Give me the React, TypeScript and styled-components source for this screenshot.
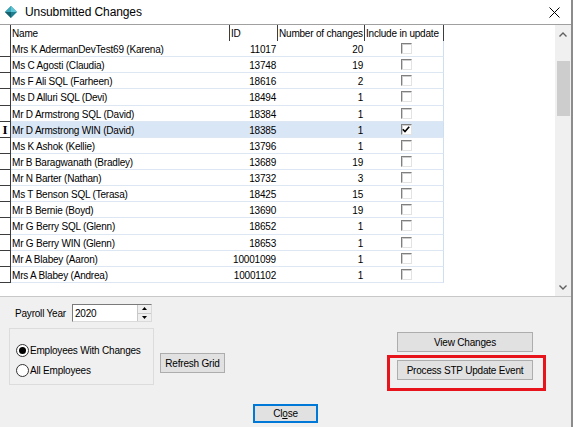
import React from 'react';
import styled, { createGlobalStyle } from 'styled-components';

const GlobalStyle = createGlobalStyle`
    html, body {
        margin: 0;
        padding: 0;
        background: #f0f0f0;
    }

    body {
        font-family: "Liberation Sans", Arial, sans-serif;
        font-size: 10px;
        letter-spacing: -0.2px;
        color: #000;
    }
`;

const ROW_H = 16.13;

const COLS = {
    indicator: 12,
    name: 219,
    id: 48,
    changes: 87,
    include: 79,
};

// <WINDOW>
const Window = styled.div`
    display: flex;
    flex-direction: column;
    width: 573px;
    height: 427px;
    background: #f0f0f0;
    box-sizing: border-box;
    border-right: 2px solid #8c8c8c;
    overflow: hidden;
`;

const TitleBar = styled.div`
    display: flex;
    align-items: center;
    height: 24px;
    flex-shrink: 0;
    background: #fff;
    padding-left: 5px;
`;

const Title = styled.span`
    margin-left: 8px;
    font-family: "Liberation Sans", Arial, sans-serif;
    font-size: 12px;
    letter-spacing: -0.1px;
    color: #000;
`;

const CloseX = styled.div`
    display: flex;
    margin-left: auto;
    margin-right: 11px;
`;
// </WINDOW>

// <GRID>
const GridPanel = styled.div`
    display: flex;
    height: 271px;
    flex-shrink: 0;
    background: #fff;
    border-top: 1px solid #a0a0a0;
    border-bottom: 1px solid #c8c8c8;
`;

const Table = styled.div`
    flex: 1;
    display: flex;
    flex-direction: column;
`;

const HeaderRow = styled.div`
    display: flex;
    height: 16px;
    flex-shrink: 0;
`;

const Row = styled.div`
    display: flex;
    height: ${ROW_H}px;
    flex-shrink: 0;
`;

const Indicator = styled.div<{ $header?: boolean }>`
    width: ${COLS.indicator - 1}px;
    flex-shrink: 0;
    border-right: 1px solid #3c3c3c;
    border-bottom: ${({ $header }) => ($header ? 'none' : '1px solid #3c3c3c')};
    box-sizing: border-box;
    display: flex;
    align-items: center;
    justify-content: center;
    font-family: "Liberation Serif", serif;
    font-weight: bold;
    font-size: 13px;
    line-height: 1;
`;

const HeadCell = styled.div<{ $w: number }>`
    width: ${({ $w }) => $w}px;
    flex-shrink: 0;
    box-sizing: border-box;
    border-right: 1px solid #3c3c3c;
    padding: 1px 0 0 1px;
    display: flex;
    align-items: center;
    white-space: nowrap;
    overflow: hidden;
`;

const Cells = styled.div<{ $selected?: boolean }>`
    display: flex;
    background: ${({ $selected }) => ($selected ? '#d9e6f5' : '#fff')};
    border-bottom: 1px solid #dde7f4;
    border-right: 1px solid #cfdff2;
    box-sizing: border-box;
`;

const Cell = styled.div<{ $w: number; $align?: string }>`
    width: ${({ $w }) => $w}px;
    flex-shrink: 0;
    box-sizing: border-box;
    display: flex;
    align-items: center;
    justify-content: ${({ $align }) => $align || 'flex-start'};
    padding: 2px 2px 0 1px;
    white-space: nowrap;
    overflow: hidden;
`;

const CheckBox = styled.div`
    width: 11px;
    height: 11px;
    box-sizing: border-box;
    border: 1px solid;
    border-color: #7f7f7f #e3e3e3 #e3e3e3 #7f7f7f;
    box-shadow: inset 1px 1px 0 #cfcfcf;
    background: #fff;
    display: flex;
    align-items: center;
    justify-content: center;
    margin: -2px 0 0 5px;
`;

const ScrollBar = styled.div`
    width: 16px;
    flex-shrink: 0;
    background: #f0f0f0;
    display: flex;
    flex-direction: column;
    align-items: center;
    padding: 7px 0 6px;
    box-sizing: border-box;
`;

const Thumb = styled.div`
    width: 13px;
    height: 55px;
    margin-top: 24px;
    background: #cdcdcd;
`;

const ScrollSpacer = styled.div`
    flex: 1;
`;
// </GRID>

// <FOOTER>
const Footer = styled.div`
    flex: 1;
    display: flex;
    flex-direction: column;
    padding: 7px 0 0 9px;
`;

const TopRow = styled.div`
    display: flex;
`;

const LeftCol = styled.div`
    display: flex;
    flex-direction: column;
    width: 222px;
`;

const YearRow = styled.div`
    display: flex;
    align-items: center;
    height: 18px;
    padding-left: 6px;
`;

const Label = styled.span`
    width: 57px;
    white-space: nowrap;
`;

const SpinBox = styled.div`
    display: flex;
    width: 80px;
    height: 18px;
    box-sizing: border-box;
    background: #fff;
    border: 1px solid;
    border-color: #7a7a7a #dadada #dadada #7a7a7a;
`;

const SpinText = styled.div`
    flex: 1;
    display: flex;
    align-items: center;
    padding-left: 2px;
`;

const SpinButtons = styled.div`
    display: flex;
    flex-direction: column;
    width: 13px;
    border-left: 1px solid #c8c8c8;
`;

const SpinButton = styled.div`
    flex: 1;
    display: flex;
    align-items: center;
    justify-content: center;
    background: #efefef;
    & + & {
        border-top: 1px solid #c8c8c8;
    }
`;

const OptionsRow = styled.div`
    display: flex;
    margin-top: 6px;
`;

const GroupBox = styled.div`
    display: flex;
    flex-direction: column;
    justify-content: center;
    gap: 6px;
    width: 145px;
    height: 57px;
    box-sizing: border-box;
    border: 1px solid #dcdcdc;
    padding: 8px 0 0 6px;
`;

const RadioLabel = styled.label`
    display: flex;
    align-items: center;
    gap: 1px;
    height: 14px;
    white-space: nowrap;
`;

const RadioCircle = styled.span<{ $checked?: boolean }>`
    width: 13px;
    height: 13px;
    box-sizing: border-box;
    border-radius: 50%;
    border: 1px solid #333;
    background: #fff;
    display: flex;
    align-items: center;
    justify-content: center;

    &::after {
        content: '';
        width: 7px;
        height: 7px;
        border-radius: 50%;
        background: ${({ $checked }) => ($checked ? '#000' : 'transparent')};
    }
`;

const Button = styled.button<{ $w: number; $focused?: boolean }>`
    width: ${({ $w }) => $w}px;
    height: 20px;
    box-sizing: border-box;
    padding: 0;
    font-family: "Liberation Sans", Arial, sans-serif;
    font-size: 10px;
    letter-spacing: -0.2px;
    color: #000;
    background: #e1e1e1;
    border: ${({ $focused }) => ($focused ? '2px solid #0078d7' : '1px solid #adadad')};
`;

const RefreshButton = styled(Button)`
    margin: 25px 0 0 6px;
`;

const RightCol = styled.div`
    display: flex;
    flex-direction: column;
    align-items: flex-start;
    margin-left: 156px;
    padding-top: 28px;
`;

const ViewButton = styled(Button)`
    margin-left: 10px;
`;

const Highlight = styled.div`
    margin-top: 3px;
    border: 3px solid #e8141c;
    padding: 2px 10px 8px 7px;
`;

const CloseRow = styled.div`
    display: flex;
    justify-content: center;
    margin: 13px 0 0 -9px;
`;

const CloseButton = styled(Button)`
    height: 19px;
`;
// </FOOTER>

const rows = [
    { name: 'Mrs K AdermanDevTest69 (Karena)', id: '11017', changes: 20 },
    { name: 'Ms C Agosti (Claudia)', id: '13748', changes: 19 },
    { name: 'Ms F Ali SQL (Farheen)', id: '18616', changes: 2 },
    { name: 'Ms D Alluri SQL (Devi)', id: '18494', changes: 1 },
    { name: 'Mr D Armstrong SQL (David)', id: '18384', changes: 1 },
    { name: 'Mr D Armstrong WIN (David)', id: '18385', changes: 1, checked: true, selected: true },
    { name: 'Ms K Ashok (Kellie)', id: '13796', changes: 1 },
    { name: 'Mr B Baragwanath (Bradley)', id: '13689', changes: 19 },
    { name: 'Mr N Barter (Nathan)', id: '13732', changes: 3 },
    { name: 'Ms T Benson SQL (Terasa)', id: '18425', changes: 15 },
    { name: 'Mr B Bernie (Boyd)', id: '13690', changes: 19 },
    { name: 'Mr G Berry SQL (Glenn)', id: '18652', changes: 1 },
    { name: 'Mr G Berry WIN (Glenn)', id: '18653', changes: 1 },
    { name: 'Mr A Blabey (Aaron)', id: '10001099', changes: 1 },
    { name: 'Mrs A Blabey (Andrea)', id: '10001102', changes: 1 },
];

const AppIcon = () => (
    <svg width="12" height="12" viewBox="0 0 12 12">
        <polygon points="6,0 12,6 6,12 0,6" fill="#1e7f91" />
        <polygon points="6,0 12,6 6,6" fill="#5cc4d4" />
        <polygon points="6,0 6,6 0,6" fill="#3aa6b8" />
        <polygon points="0,6 6,6 6,12" fill="#17606e" />
    </svg>
);

const Chevron = ({ up }: { up?: boolean }) => (
    <svg width="8" height="5" viewBox="0 0 8 5">
        <polyline
            points={up ? '0.5,4.5 4,1 7.5,4.5' : '0.5,0.5 4,4 7.5,0.5'}
            fill="none"
            stroke="#606060"
            strokeWidth="1.4"
        />
    </svg>
);

const Tick = () => (
    <svg width="8" height="7" viewBox="0 0 8 7">
        <polyline points="0.8,3.2 3,5.6 7.2,0.8" fill="none" stroke="#000" strokeWidth="1.6" />
    </svg>
);

const SpinArrow = ({ up }: { up?: boolean }) => (
    <svg width="5" height="3" viewBox="0 0 5 3">
        <polygon points={up ? '0,3 5,3 2.5,0' : '0,0 5,0 2.5,3'} fill="#000" />
    </svg>
);

export default function App() {
    return (
        <>
            <GlobalStyle />
            <Window>
                <TitleBar>
                    <AppIcon />
                    <Title>Unsubmitted Changes</Title>
                    <CloseX>
                        <svg width="11" height="11" viewBox="0 0 11 11">
                            <path d="M0.5,0.5 L10.5,10.5 M10.5,0.5 L0.5,10.5" stroke="#000" strokeWidth="1" />
                        </svg>
                    </CloseX>
                </TitleBar>

                <GridPanel>
                    <Table>
                        <HeaderRow>
                            <Indicator $header />
                            <HeadCell $w={COLS.name}>Name</HeadCell>
                            <HeadCell $w={COLS.id}>ID</HeadCell>
                            <HeadCell $w={COLS.changes}>Number of changes</HeadCell>
                            <HeadCell $w={COLS.include}>Include in update</HeadCell>
                        </HeaderRow>
                        {rows.map((r) => (
                            <Row key={r.id}>
                                <Indicator>{r.selected ? 'I' : ''}</Indicator>
                                <Cells $selected={r.selected}>
                                    <Cell $w={COLS.name}>{r.name}</Cell>
                                    <Cell $w={COLS.id} $align="flex-end">{r.id}</Cell>
                                    <Cell $w={COLS.changes} $align="flex-end">{r.changes}</Cell>
                                    <Cell $w={COLS.include - 1} $align="center">
                                        <CheckBox>{r.checked && <Tick />}</CheckBox>
                                    </Cell>
                                </Cells>
                            </Row>
                        ))}
                    </Table>
                    <ScrollBar>
                        <Chevron up />
                        <Thumb />
                        <ScrollSpacer />
                        <Chevron />
                    </ScrollBar>
                </GridPanel>

                <Footer>
                    <TopRow>
                        <LeftCol>
                            <YearRow>
                                <Label>Payroll Year</Label>
                                <SpinBox>
                                    <SpinText>2020</SpinText>
                                    <SpinButtons>
                                        <SpinButton><SpinArrow up /></SpinButton>
                                        <SpinButton><SpinArrow /></SpinButton>
                                    </SpinButtons>
                                </SpinBox>
                            </YearRow>
                            <OptionsRow>
                                <GroupBox>
                                    <RadioLabel>
                                        <RadioCircle $checked />
                                        Employees With Changes
                                    </RadioLabel>
                                    <RadioLabel>
                                        <RadioCircle />
                                        All Employees
                                    </RadioLabel>
                                </GroupBox>
                                <RefreshButton $w={65}>Refresh Grid</RefreshButton>
                            </OptionsRow>
                        </LeftCol>
                        <RightCol>
                            <ViewButton $w={136}>View Changes</ViewButton>
                            <Highlight>
                                <Button $w={136}>Process STP Update Event</Button>
                            </Highlight>
                        </RightCol>
                    </TopRow>
                    <CloseRow>
                        <CloseButton $w={65} $focused>
                            Cl<u>o</u>se
                        </CloseButton>
                    </CloseRow>
                </Footer>
            </Window>
        </>
    );
}
